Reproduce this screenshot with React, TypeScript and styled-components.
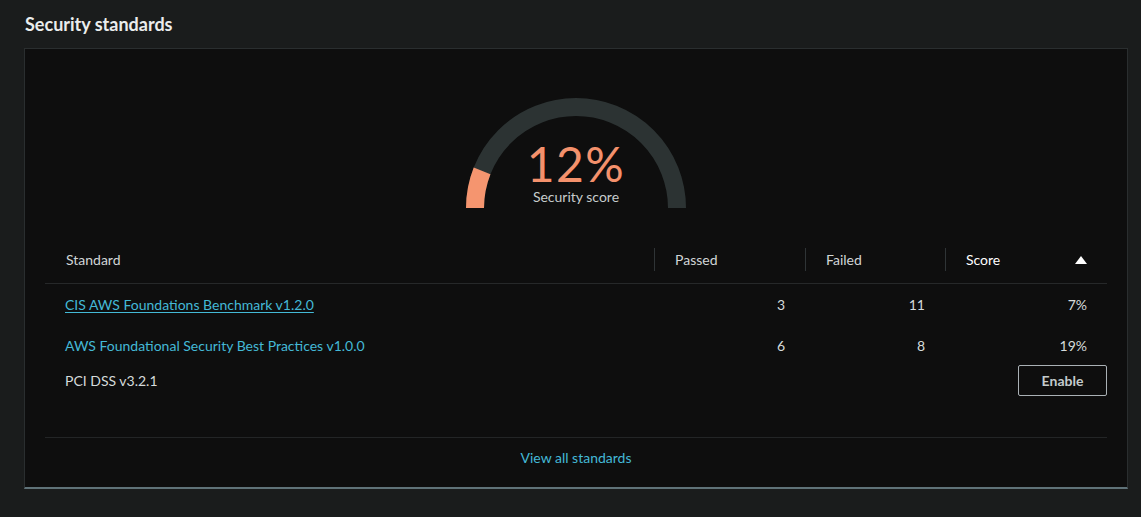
import React from "react";
import styled, { createGlobalStyle } from "styled-components";

const Global = createGlobalStyle`
  html, body { margin: 0; padding: 0; background: #1a1c1c; }
  body { font-family: Lato, "Noto Sans", sans-serif; color: #d5dbdb; }
  * { box-sizing: border-box; }
`;

const Page = styled.div`
  width: 1141px;
  height: 517px;
  padding: 0 13px 0 24px;
  display: flex;
  flex-direction: column;
`;

const Title = styled.h2`
  margin: 0;
  height: 48px;
  padding-top: 12px;
  font-size: 18px;
  line-height: 24px;
  font-weight: 700;
  color: #eaeded;
  padding-left: 1px;
`;

const Card = styled.section`
  background: #0e0e0e;
  border: 1px solid #2a2e2f;
  border-bottom: 2px solid #5f7278;
  padding: 0 20px;
  display: flex;
  flex-direction: column;
`;

const GaugeWrap = styled.div`
  position: relative;
  align-self: center;
  width: 220px;
  height: 110px;
  margin-top: 49px;
`;

const GaugeText = styled.div`
  position: absolute;
  left: 0;
  right: 0;
  bottom: 2px;
  display: flex;
  flex-direction: column;
  align-items: center;
`;

const Percent = styled.div`
  font-size: 48px;
  line-height: 40px;
  letter-spacing: 1.5px;
  margin-bottom: 4px;
  color: #f4916c;
  font-weight: 400;
`;

const ScoreLabel = styled.div`
  font-size: 14px;
  line-height: 18px;
  color: #c6cccc;
`;

const Table = styled.div`
  margin-top: 28px;
  display: grid;
  grid-template-columns: 609px 151px 140px 1fr;
  grid-template-rows: 48px 41px 40px 30px;
`;

const HeadCell = styled.div<{ $active?: boolean; $divider?: boolean }>`
  position: relative;
  display: flex;
  align-items: center;
  justify-content: space-between;
  padding: 0 20px 0 21px;
  font-size: 14px;
  color: ${(p) => (p.$active ? "#ffffff" : "#d1d5d6")};
  border-bottom: 1px solid #262829;
  &::before {
    content: "";
    display: ${(p) => (p.$divider ? "block" : "none")};
    position: absolute;
    left: 0;
    top: 12px;
    bottom: 12px;
    width: 1px;
    background: #2f3436;
  }
`;

const SortArrow = styled.span`
  width: 0;
  height: 0;
  border-left: 6px solid transparent;
  border-right: 6px solid transparent;
  border-bottom: 8px solid #ffffff;
`;

const Cell = styled.div<{ $num?: boolean }>`
  display: flex;
  align-items: center;
  justify-content: ${(p) => (p.$num ? "flex-end" : "flex-start")};
  padding: 0 20px;
  font-size: 14px;
  color: #d5dbdb;
`;

const Link = styled.a<{ $underline?: boolean }>`
  color: #44b9d6;
  text-decoration: ${(p) => (p.$underline ? "underline" : "none")};
  text-underline-offset: 2px;
  cursor: pointer;
`;

const ButtonCell = styled.div`
  display: flex;
  align-items: center;
  justify-content: flex-end;
`;

const Button = styled.button`
  width: 89px;
  height: 31px;
  background: transparent;
  border: 1px solid #aab1b5;
  border-radius: 2px;
  color: #c4cbcd;
  font-family: inherit;
  font-weight: 700;
  font-size: 14px;
`;

const Footer = styled.div`
  margin-top: 42px;
  border-top: 1px solid #232526;
  height: 50px;
  padding-top: 11px;
  display: flex;
  justify-content: center;
  font-size: 14px;
  line-height: 18px;
`;

const rows = [
  { name: "CIS AWS Foundations Benchmark v1.2.0", passed: 3, failed: 11, score: "7%", underline: true },
  { name: "AWS Foundational Security Best Practices v1.0.0", passed: 6, failed: 8, score: "19%", underline: false },
];

function Gauge({ value }: { value: number }) {
  const cx = 110, cy = 110, r = 101;
  const a = Math.PI * (1 - value / 100);
  const ex = cx + r * Math.cos(a);
  const ey = cy - r * Math.sin(a);
  return (
    <svg width="220" height="110" viewBox="0 0 220 110">
      <path d={`M ${cx - r} ${cy} A ${r} ${r} 0 0 1 ${cx + r} ${cy}`} fill="none" stroke="#2c3333" strokeWidth="18" />
      <path d={`M ${cx - r} ${cy} A ${r} ${r} 0 0 1 ${ex} ${ey}`} fill="none" stroke="#f5956f" strokeWidth="18" />
    </svg>
  );
}

export default function App() {
  return (
    <>
      <Global />
      <Page>
        <Title>Security standards</Title>
        <Card>
          <GaugeWrap>
            <Gauge value={12} />
            <GaugeText>
              <Percent>12%</Percent>
              <ScoreLabel>Security score</ScoreLabel>
            </GaugeText>
          </GaugeWrap>
          <Table>
            <HeadCell>Standard</HeadCell>
            <HeadCell $divider>Passed</HeadCell>
            <HeadCell $divider>Failed</HeadCell>
            <HeadCell $divider $active>
              Score
              <SortArrow />
            </HeadCell>
            {rows.map((r) => (
              <React.Fragment key={r.name}>
                <Cell>
                  <Link $underline={r.underline}>{r.name}</Link>
                </Cell>
                <Cell $num>{r.passed}</Cell>
                <Cell $num>{r.failed}</Cell>
                <Cell $num>{r.score}</Cell>
              </React.Fragment>
            ))}
            <Cell>PCI DSS v3.2.1</Cell>
            <Cell />
            <Cell />
            <ButtonCell>
              <Button>Enable</Button>
            </ButtonCell>
          </Table>
          <Footer>
            <Link>View all standards</Link>
          </Footer>
        </Card>
      </Page>
    </>
  );
}
